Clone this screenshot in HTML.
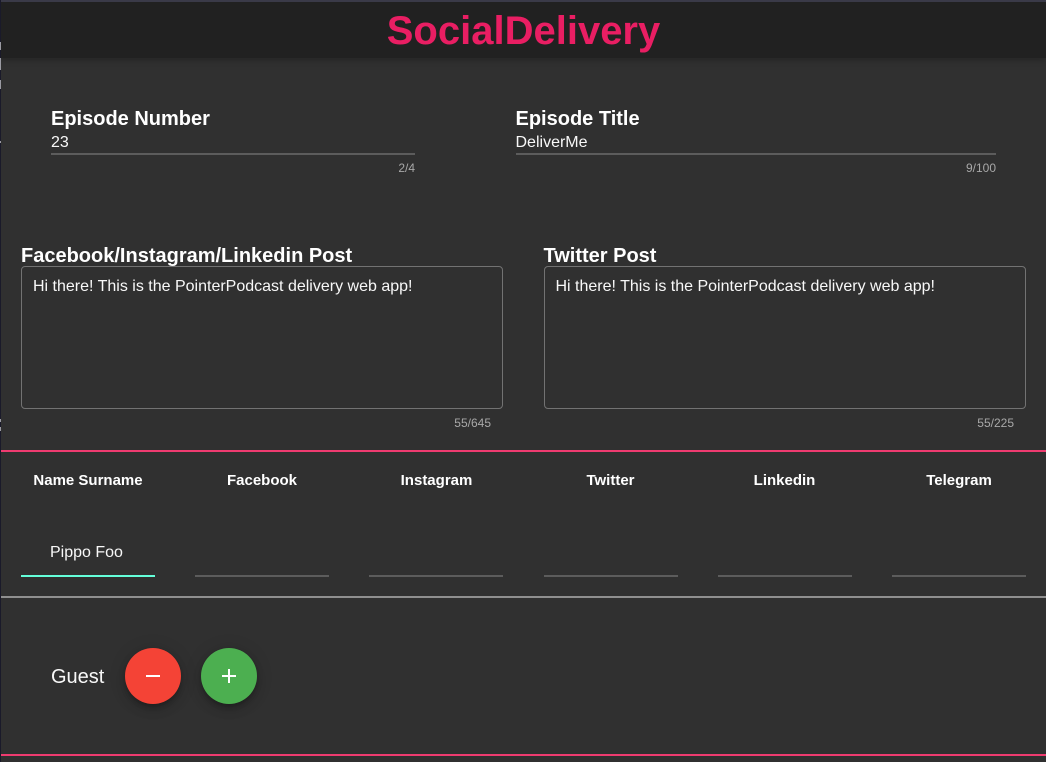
<!DOCTYPE html>
<html><head><meta charset="utf-8"><style>
html,body{margin:0;padding:0;background:#303030;}
body{width:1046px;height:762px;position:relative;overflow:hidden;font-family:"Liberation Sans",sans-serif;color:#fff;}
.a{position:absolute;white-space:nowrap;}
.lbl{font-size:20px;font-weight:700;line-height:24px;}
.val{font-size:16px;line-height:20px;color:#f8f8f8;}
.hint{font-size:12px;line-height:14px;color:#a8a8a8;}
.line{position:absolute;height:2px;background:#5c5c5c;}
.box{position:absolute;box-sizing:border-box;border:1px solid #727272;border-radius:4px;width:482px;height:143px;top:266px;}
.th{position:absolute;top:472px;font-size:15px;font-weight:700;line-height:18px;text-align:center;width:134px;}
.fab{position:absolute;top:648px;width:56px;height:56px;border-radius:50%;box-shadow:0 3px 5px -1px rgba(0,0,0,.2),0 6px 10px 0 rgba(0,0,0,.14),0 1px 18px 0 rgba(0,0,0,.12);}
</style></head><body>
<div class="a" style="left:0;top:0;width:1046px;height:58px;background:#212121;box-shadow:0 2px 6px rgba(0,0,0,.25);"></div>
<div class="a" style="left:0;top:0;width:1046px;height:2px;background:#3a3a48;"></div>
<div class="a" style="left:0;top:0;width:1px;height:762px;background:#1a1a2a;"></div>
<div class="a" style="left:0;top:42px;width:1px;height:8px;background:#9a9aa2;"></div>
<div class="a" style="left:0;top:58px;width:1px;height:12px;background:#9a9aa2;"></div>
<div class="a" style="left:0;top:80px;width:1px;height:9px;background:#9a9aa2;"></div>
<div class="a" style="left:0;top:141px;width:1px;height:2px;background:#9a9aa2;"></div>
<div class="a" style="left:0;top:419px;width:1px;height:3px;background:#9a9aa2;"></div>
<div class="a" style="left:0;top:427px;width:1px;height:4px;background:#9a9aa2;"></div>

<div class="a" style="left:0.5px;width:1046px;top:6px;text-align:center;font-size:40px;font-weight:700;line-height:50px;color:#e91e63;">SocialDelivery</div>

<div class="a lbl" style="left:51px;top:107px;">Episode Number</div>
<div class="a val" style="left:51px;top:133px;">23</div>
<div class="line" style="left:51px;top:153px;width:364px;"></div>
<div class="a hint" style="right:631px;top:161px;">2/4</div>

<div class="a lbl" style="left:515.5px;top:107px;">Episode Title</div>
<div class="a val" style="left:515.5px;top:133px;">DeliverMe</div>
<div class="line" style="left:516px;top:153px;width:480px;"></div>
<div class="a hint" style="right:50px;top:161px;">9/100</div>

<div class="a lbl" style="left:21px;top:244px;">Facebook/Instagram/Linkedin Post</div>
<div class="box" style="left:21px;"></div>
<div class="a val" style="left:33px;top:277px;">Hi there! This is the PointerPodcast delivery web app!</div>
<div class="a hint" style="right:555px;top:416px;">55/645</div>

<div class="a lbl" style="left:543.5px;top:244px;">Twitter Post</div>
<div class="box" style="left:544px;"></div>
<div class="a val" style="left:555.5px;top:277px;">Hi there! This is the PointerPodcast delivery web app!</div>
<div class="a hint" style="right:32px;top:416px;">55/225</div>

<div class="a" style="left:1px;top:450px;width:1045px;height:2px;background:#ef3b70;"></div>

<div class="th" style="left:21px;">Name Surname</div>
<div class="th" style="left:195px;">Facebook</div>
<div class="th" style="left:369.5px;">Instagram</div>
<div class="th" style="left:543.5px;">Twitter</div>
<div class="th" style="left:717.5px;">Linkedin</div>
<div class="th" style="left:892px;">Telegram</div>

<div class="a val" style="left:50px;top:543px;">Pippo Foo</div>
<div class="line" style="left:21px;top:575px;width:134px;background:#64ffda;"></div>
<div class="line" style="left:195px;top:575px;width:134px;"></div>
<div class="line" style="left:369px;top:575px;width:134px;"></div>
<div class="line" style="left:544px;top:575px;width:134px;"></div>
<div class="line" style="left:718px;top:575px;width:134px;"></div>
<div class="line" style="left:892px;top:575px;width:134px;"></div>

<div class="a" style="left:1px;top:596px;width:1045px;height:2px;background:#8f8f8f;"></div>

<div class="a" style="left:51px;top:665px;font-size:20px;line-height:24px;color:#f8f8f8;">Guest</div>
<div class="fab" style="left:125px;background:#f44336;">
<svg width="56" height="56" style="position:absolute;left:0;top:0"><path d="M21 27h14v2H21z" fill="#fff"/></svg></div>
<div class="fab" style="left:201px;background:#4caf50;">
<svg width="56" height="56" style="position:absolute;left:0;top:0"><path d="M21 27h6v-6h2v6h6v2h-6v6h-2v-6h-6z" fill="#fff"/></svg></div>

<div class="a" style="left:1px;top:754px;width:1045px;height:2px;background:#ef3b70;"></div>
</body></html>
